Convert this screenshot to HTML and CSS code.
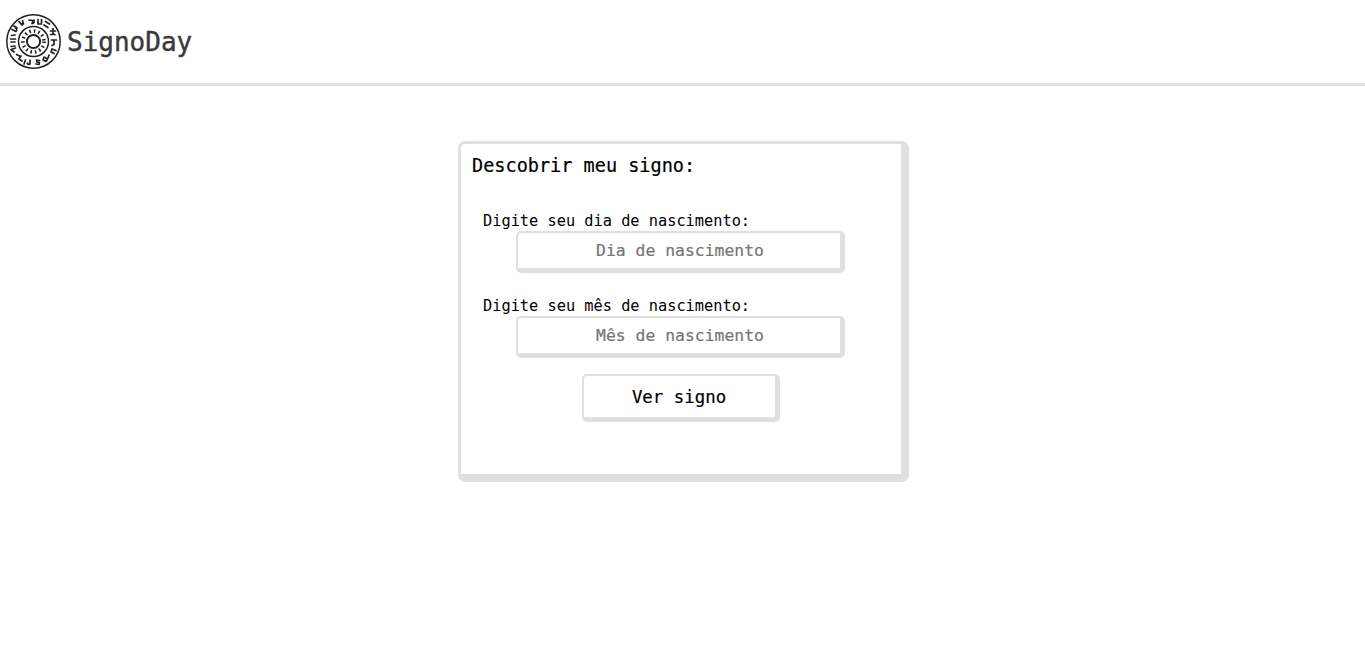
FILE: index.html
```html
<!DOCTYPE html>
<html lang="pt-BR">
<head>
    <meta charset="UTF-8">
    <title>SignoDay</title>
    <link rel="stylesheet" href="styles.css">
</head>

<body>
    <header class="topbar">
        <svg class="logo" viewBox="0 0 55 55" fill="none" stroke="#222" stroke-linecap="round" stroke-linejoin="round">
            <circle cx="27.5" cy="27.5" r="26.7" stroke-width="1.5"/>
            <circle cx="27.5" cy="27.5" r="15" stroke-width="1.5"/>
            <circle cx="27.5" cy="27.5" r="6.6" stroke-width="2"/>
            <circle cx="27.5" cy="27.5" r="10.500" stroke-width="3.600" stroke-linecap="butt" stroke-dasharray="1.500 3.000"/>
            <g stroke-width="1.700">
                <path d="M23 6l4 .5-1 3M26 9.500c1.500 0 2.500-1 2-3.500"/>
                <path d="M32 5.500v4.500h3.500M35.500 5.500v3"/>
                <path d="M39.500 7.500l4 2.500M38 11l4 2.500"/>
                <path d="M47 14.500v5M44.500 17h5M44.500 20.500h4.500"/>
                <path d="M45.500 26h5M48 26v4.500l-2 1"/>
                <path d="M50 36.500l-4-1.500-1 3 3 1.500"/>
                <path d="M38 43l3.500 2-1.500 2.500-3-1.500zM43 41l-1 3"/>
                <path d="M33.500 46.500l-3-.5.500 2 2.500.500-.500 2-3-.500"/>
                <path d="M24 46v3.500c0 1.500-3 1-2.500-.500M19.500 46l-1.500 4"/>
                <path d="M15 42l-2 3 3 2M10.500 40.500l3 1.500"/>
                <path d="M9.500 34l-4.500 1.500 3 2.500M5 32.500l4-.5"/>
                <path d="M4.500 25h5M5 28h4M5.500 21.500l3.500-.5"/>
                <path d="M6 15.500l4 2c1-1 1-3-.5-3.500M8 12l3 2"/>
                <path d="M13 7.500l3 3.500M16.500 6.500l1 3.500-3-.5"/>
            </g>
        </svg>
        <span class="brand">SignoDay</span>
    </header>

    <main class="content">
        <form class="card">
            <h2 class="card-title">Descobrir meu signo:</h2>
            <div class="field">
                <label class="field-label" for="dia">Digite seu dia de nascimento:</label>
                <input class="field-input" id="dia" type="text" placeholder="Dia de nascimento">
            </div>
            <div class="field">
                <label class="field-label" for="mes">Digite seu mês de nascimento:</label>
                <input class="field-input" id="mes" type="text" placeholder="Mês de nascimento">
            </div>
            <button class="submit" type="button">Ver signo</button>
        </form>
    </main>
</body>
</html>
```

FILE: styles.css
```css
body {
    margin: 0;
    background: #fff;
    font-family: "DejaVu Sans Mono", "Liberation Mono", monospace;
    color: #000;
}

.topbar {
    display: flex;
    align-items: center;
    gap: 6px;
    height: 83px;
    padding-left: 6px;
    border-bottom: 3px solid #e0e0e0;
}

.logo {
    width: 55px;
    height: 55px;
}

.brand {
    font-size: 26px;
    color: #3a3a3a;
    -webkit-text-stroke: 0.4px #3a3a3a;
}

.content {
    display: flex;
    justify-content: center;
    padding: 55px 0 0 2px;
}

.card {
    box-sizing: border-box;
    width: 451px;
    height: 341px;
    padding: 11px 12px 0 11px;
    border: solid #e0e0e0;
    border-width: 3px 8px 8px 3px;
    border-radius: 7px;
}

.card-title {
    margin: 0 0 35px;
    font-size: 18.55px;
    font-weight: 400;
    line-height: 22px;
    -webkit-text-stroke: 0.2px #000;
}

.field {
    display: flex;
    flex-direction: column;
    align-items: center;
    margin: 0 0 24px;
}

.field-label {
    align-self: flex-start;
    margin-left: 11px;
    font-size: 15.3px;
    line-height: 19px;
}

.field-input {
    box-sizing: border-box;
    width: 329px;
    height: 42px;
    padding: 0 0 0 2px;
    border: solid #e0e0e0;
    border-width: 2px 5px 5px 2px;
    border-radius: 5px;
    outline: none;
    font-family: inherit;
    font-size: 16.4px;
    text-align: center;
    -webkit-text-stroke: 0.2px #757575;
}

.field-input::placeholder {
    color: #757575;
}

.submit {
    display: block;
    box-sizing: border-box;
    width: 198px;
    height: 48px;
    margin: -8px auto 0;
    padding: 0;
    border: solid #e0e0e0;
    border-width: 2px 5px 5px 2px;
    border-radius: 5px;
    background: #fff;
    font-family: inherit;
    font-size: 17.4px;
    color: #000;
    -webkit-text-stroke: 0.2px #000;
}
```
